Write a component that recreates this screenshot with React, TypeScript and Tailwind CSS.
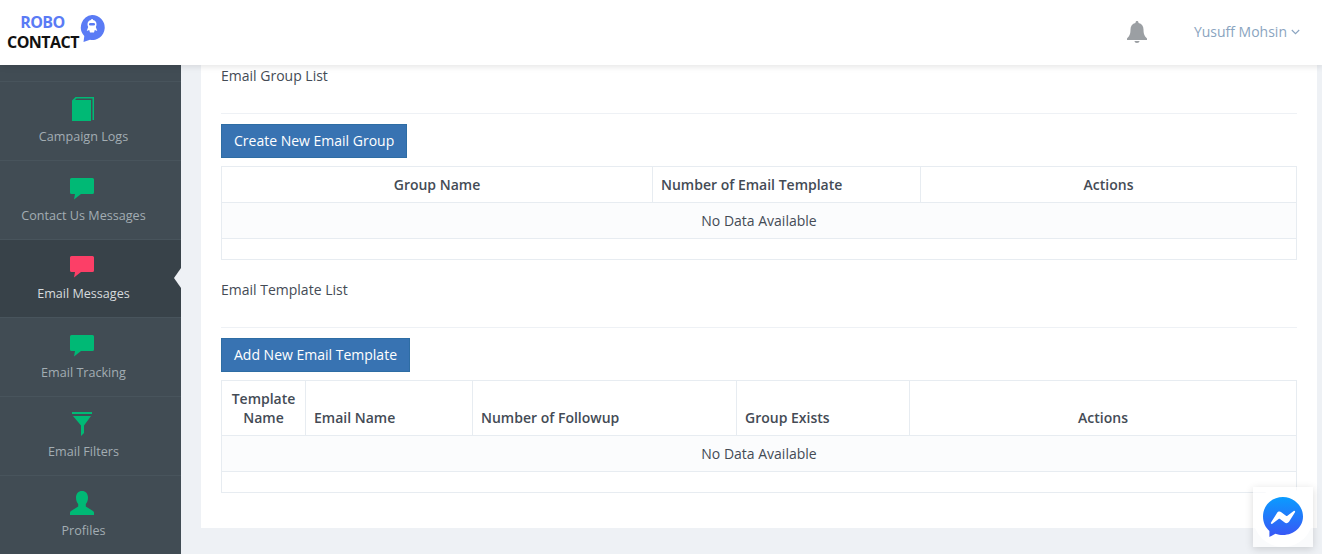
const openSans = { fontFamily: '"Open Sans", "Liberation Sans", sans-serif' };

function Chat({ color }: { color: string }) {
  return (
    <svg width="24" height="22" viewBox="0 0 24 22" className="block mt-[1.8px]">
      <path fill={color} d="M1.5 0h21A1.5 1.5 0 0 1 24 1.500v13a1.500 1.500 0 0 1-1.500 1.500H11l-7 5.500 1-5.500H1.500A1.500 1.500 0 0 1 0 14.500v-13A1.500 1.500 0 0 1 1.500 0z" />
    </svg>
  );
}

function Book() {
  return (
    <svg width="22" height="24" viewBox="0 0 22 24" className="block ml-[2px]">
      <path fill="#00b975" d="M0 3.500 3.500 0H22v23h-1.500V1.500H4.500L3 3h16v21H0z" />
    </svg>
  );
}

function Filter() {
  return (
    <svg width="20" height="24" viewBox="0 0 20 24" className="block">
      <path fill="#00b975" d="M0 0h20v2H0zM1 4h18l-7 9.500V21l-3 3V13.500z" />
    </svg>
  );
}

function Person() {
  return (
    <svg width="24" height="24" viewBox="0 0 24 24" className="block">
      <path fill="#00b975" d="M12 0c3.600 0 6 2.700 6 6.500 0 2.600-.8 5-2.200 6.500v2.500L23 20c.6.400 1 .9 1 1.500V24H0v-2.500c0-.6.400-1.100 1-1.500l7.200-4.500V13C6.800 11.500 6 9.100 6 6.500 6 2.700 8.400 0 12 0z" />
    </svg>
  );
}

function Logo() {
  return (
    <svg width="26" height="28" viewBox="0 0 26 28" className="block">
      <path fill="#5a7bf5" d="M13 0a12.500 12.500 0 1 1-2 24.800L4.500 27l.8-6A12.500 12.500 0 0 1 13 0z" />
      <path fill="#fff" d="M13 4c.6 0 1 .4 1 .9 2.300.5 3.500 2.200 3.500 4.300 0 1.200-.3 2-.7 2.700l1.500 4-2.500-1-.8 2.600h-4l-.8-2.600-2.500 1 1.500-4c-.4-.7-.7-1.500-.7-2.700 0-2.100 1.200-3.800 3.500-4.300 0-.5.400-.9 1-.9z" />
      <rect x="10" y="8" width="6" height="2.600" rx="1.300" fill="#5a7bf5" />
    </svg>
  );
}

function Item({ label, icon, active, last }: { label: string; icon: React.ReactNode; active?: boolean; last?: boolean }) {
  return (
    <div className={`relative h-[78.8px] shrink-0 flex flex-col items-center pr-[14px] border-b ${last ? "border-transparent" : "border-[#48545c]"} ${active ? "bg-[#384249] text-[#d6dbde]" : "text-[#a3adb3]"}`}>
      <div className="h-[25px] mt-[15px] pr-[3px] flex items-start justify-center">{icon}</div>
      <div className="text-[12.6px] leading-[18px] mt-[5.8px]">{label}</div>
      {active && <div className="absolute right-0 top-[28px] w-0 h-0 border-y-[10px] border-y-transparent border-r-[7px] border-r-[#eef1f5]" />}
    </div>
  );
}

function Section({ title, button, children }: { title: string; button: string; children: React.ReactNode }) {
  return (
    <section>
      <div className="h-[48px] border-b border-[#eef1f5] text-[14px] leading-[20px] text-[#444b55]">{title}</div>
      <button className="mt-[10px] h-[34px] px-[12px] bg-[#3873b2] border border-[#2e6da4] text-white text-[14px] leading-[20px] block">{button}</button>
      {children}
    </section>
  );
}

const thBase = "border border-[#e7ecf1] px-2 py-2 text-[14px] leading-[19px] font-semibold text-[#444b55]";

export default function App() {
  return (
    <div className="h-[554px] w-[1322px] overflow-hidden flex flex-col bg-[#eef1f5]" style={openSans}>
      <header className="relative z-10 h-[65px] shrink-0 bg-white shadow-[0_2px_6px_rgba(0,0,0,0.1)] flex items-center justify-between">
        <div className="ml-[7px] flex items-start">
          <div className="flex flex-col items-center font-bold text-[16px] leading-[20px] -mt-[2px] tracking-[-0.55px]">
            <span className="text-[#5a7bf5] pr-[1px]">ROBO</span>
            <span className="text-[#111111]">CONTACT</span>
          </div>
          <div className="mt-[1px]"><Logo /></div>
        </div>
        <div className="flex items-center mr-[22px] -mt-[2px]">
          <svg width="20" height="22" viewBox="0 0 20 22" className="mr-[47px]">
            <path fill="#9b9fa3" d="M10 0c.9 0 1.500.6 1.500 1.500v.4c3.300.7 5 3.300 5 6.600 0 4.500 1 6.500 3.500 9V19H0v-1.500c2.500-2.500 3.500-4.500 3.500-9 0-3.300 1.700-5.900 5-6.600v-.4C8.500.6 9.100 0 10 0zM7.500 20h5c0 1.200-1.100 2-2.500 2s-2.500-.8-2.500-2z" />
          </svg>
          <span className="text-[14px] leading-[20px] text-[#8aa4c0]">Yusuff Mohsin</span>
          <svg width="9" height="6" viewBox="0 0 9 6" className="ml-[4px] mt-[1px]">
            <path d="M.8 1 4.500 4.700 8.200 1" fill="none" stroke="#8aa4c0" strokeWidth="1.100" />
          </svg>
        </div>
      </header>
      <div className="relative flex-1 flex min-h-0">
        <aside className="w-[181px] shrink-0 bg-[#414c54] overflow-hidden flex flex-col">
          <div className="h-[17px] shrink-0 border-b border-[#48545c]" />
          <Item label="Campaign Logs" icon={<Book />} />
          <Item label="Contact Us Messages" icon={<Chat color="#00b975" />} />
          <Item label="Email Messages" icon={<Chat color="#fc3f67" />} active />
          <Item label="Email Tracking" icon={<Chat color="#00b975" />} />
          <Item label="Email Filters" icon={<Filter />} />
          <Item label="Profiles" icon={<Person />} last />
        </aside>
        <main className="flex-1 pl-[20px] pr-[5px] min-w-0">
          <div className="bg-white h-[463px] px-[20px] pt-[1px]">
            <Section title="Email Group List" button="Create New Email Group">
              <table className="mt-[8px] w-[1076px] table-fixed border-collapse border border-[#e7ecf1]">
                <colgroup><col className="w-[431px]" /><col className="w-[268px]" /><col /></colgroup>
                <thead>
                  <tr className="h-[36px]">
                    <th className={`${thBase} text-center`}>Group Name</th>
                    <th className={`${thBase} text-left`}>Number of Email Template</th>
                    <th className={`${thBase} text-center`}>Actions</th>
                  </tr>
                </thead>
                <tbody>
                  <tr className="h-[36px] bg-[#fbfcfd]"><td colSpan={3} className="border border-[#e7ecf1] text-center text-[14px] text-[#444b55]">No Data Available</td></tr>
                  <tr className="h-[21px]"><td colSpan={3} className="border border-[#e7ecf1]" /></tr>
                </tbody>
              </table>
            </Section>
            <div className="h-[20px]" />
            <Section title="Email Template List" button="Add New Email Template">
              <table className="mt-[8px] w-[1076px] table-fixed border-collapse border border-[#e7ecf1]">
                <colgroup><col className="w-[84px]" /><col className="w-[167px]" /><col className="w-[264px]" /><col className="w-[173px]" /><col /></colgroup>
                <thead>
                  <tr className="h-[55px]">
                    <th className={`${thBase} text-center align-bottom`}>Template Name</th>
                    <th className={`${thBase} text-left align-bottom`}>Email Name</th>
                    <th className={`${thBase} text-left align-bottom`}>Number of Followup</th>
                    <th className={`${thBase} text-left align-bottom`}>Group Exists</th>
                    <th className={`${thBase} text-center align-bottom`}>Actions</th>
                  </tr>
                </thead>
                <tbody>
                  <tr className="h-[36px] bg-[#fbfcfd]"><td colSpan={5} className="border border-[#e7ecf1] text-center text-[14px] text-[#444b55]">No Data Available</td></tr>
                  <tr className="h-[21px]"><td colSpan={5} className="border border-[#e7ecf1]" /></tr>
                </tbody>
              </table>
            </Section>
          </div>
        </main>
        <div className="absolute left-[1253px] top-[422px] w-[60px] h-[60px] bg-white/70 shadow-[0_2px_8px_rgba(0,0,0,0.15)]">
          <div className="w-full h-full rounded-full bg-white flex items-center justify-center">
            <svg width="40" height="40" viewBox="0 0 40 40">
              <defs>
                <linearGradient id="mg" x1="0.5" y1="0" x2="0.5" y2="1">
                  <stop offset="0" stopColor="#0a9cff" />
                  <stop offset="1" stopColor="#3a55f5" />
                </linearGradient>
              </defs>
              <path fill="url(#mg)" d="M20 0C8.700 0 0 8.300 0 19.500c0 5.900 2.400 11 6.400 14.500v6l6-3.300c2.300.8 4.900 1.300 7.600 1.300 11.300 0 20-8.300 20-18.500S31.300 0 20 0z" />
              <path fill="#fff" d="M8 25.500 14 16c.9-1.500 2.900-1.900 4.300-.8l4.700 3.500c.4.300 1 .3 1.400 0l6.300-4.800c.8-.6 1.900.4 1.300 1.300L26 24.700c-1 1.500-3 1.900-4.300.8L17 22c-.4-.3-1-.3-1.400 0l-6.300 4.800c-.8.600-1.900-.4-1.300-1.300z" />
            </svg>
          </div>
        </div>
      </div>
    </div>
  );
}
